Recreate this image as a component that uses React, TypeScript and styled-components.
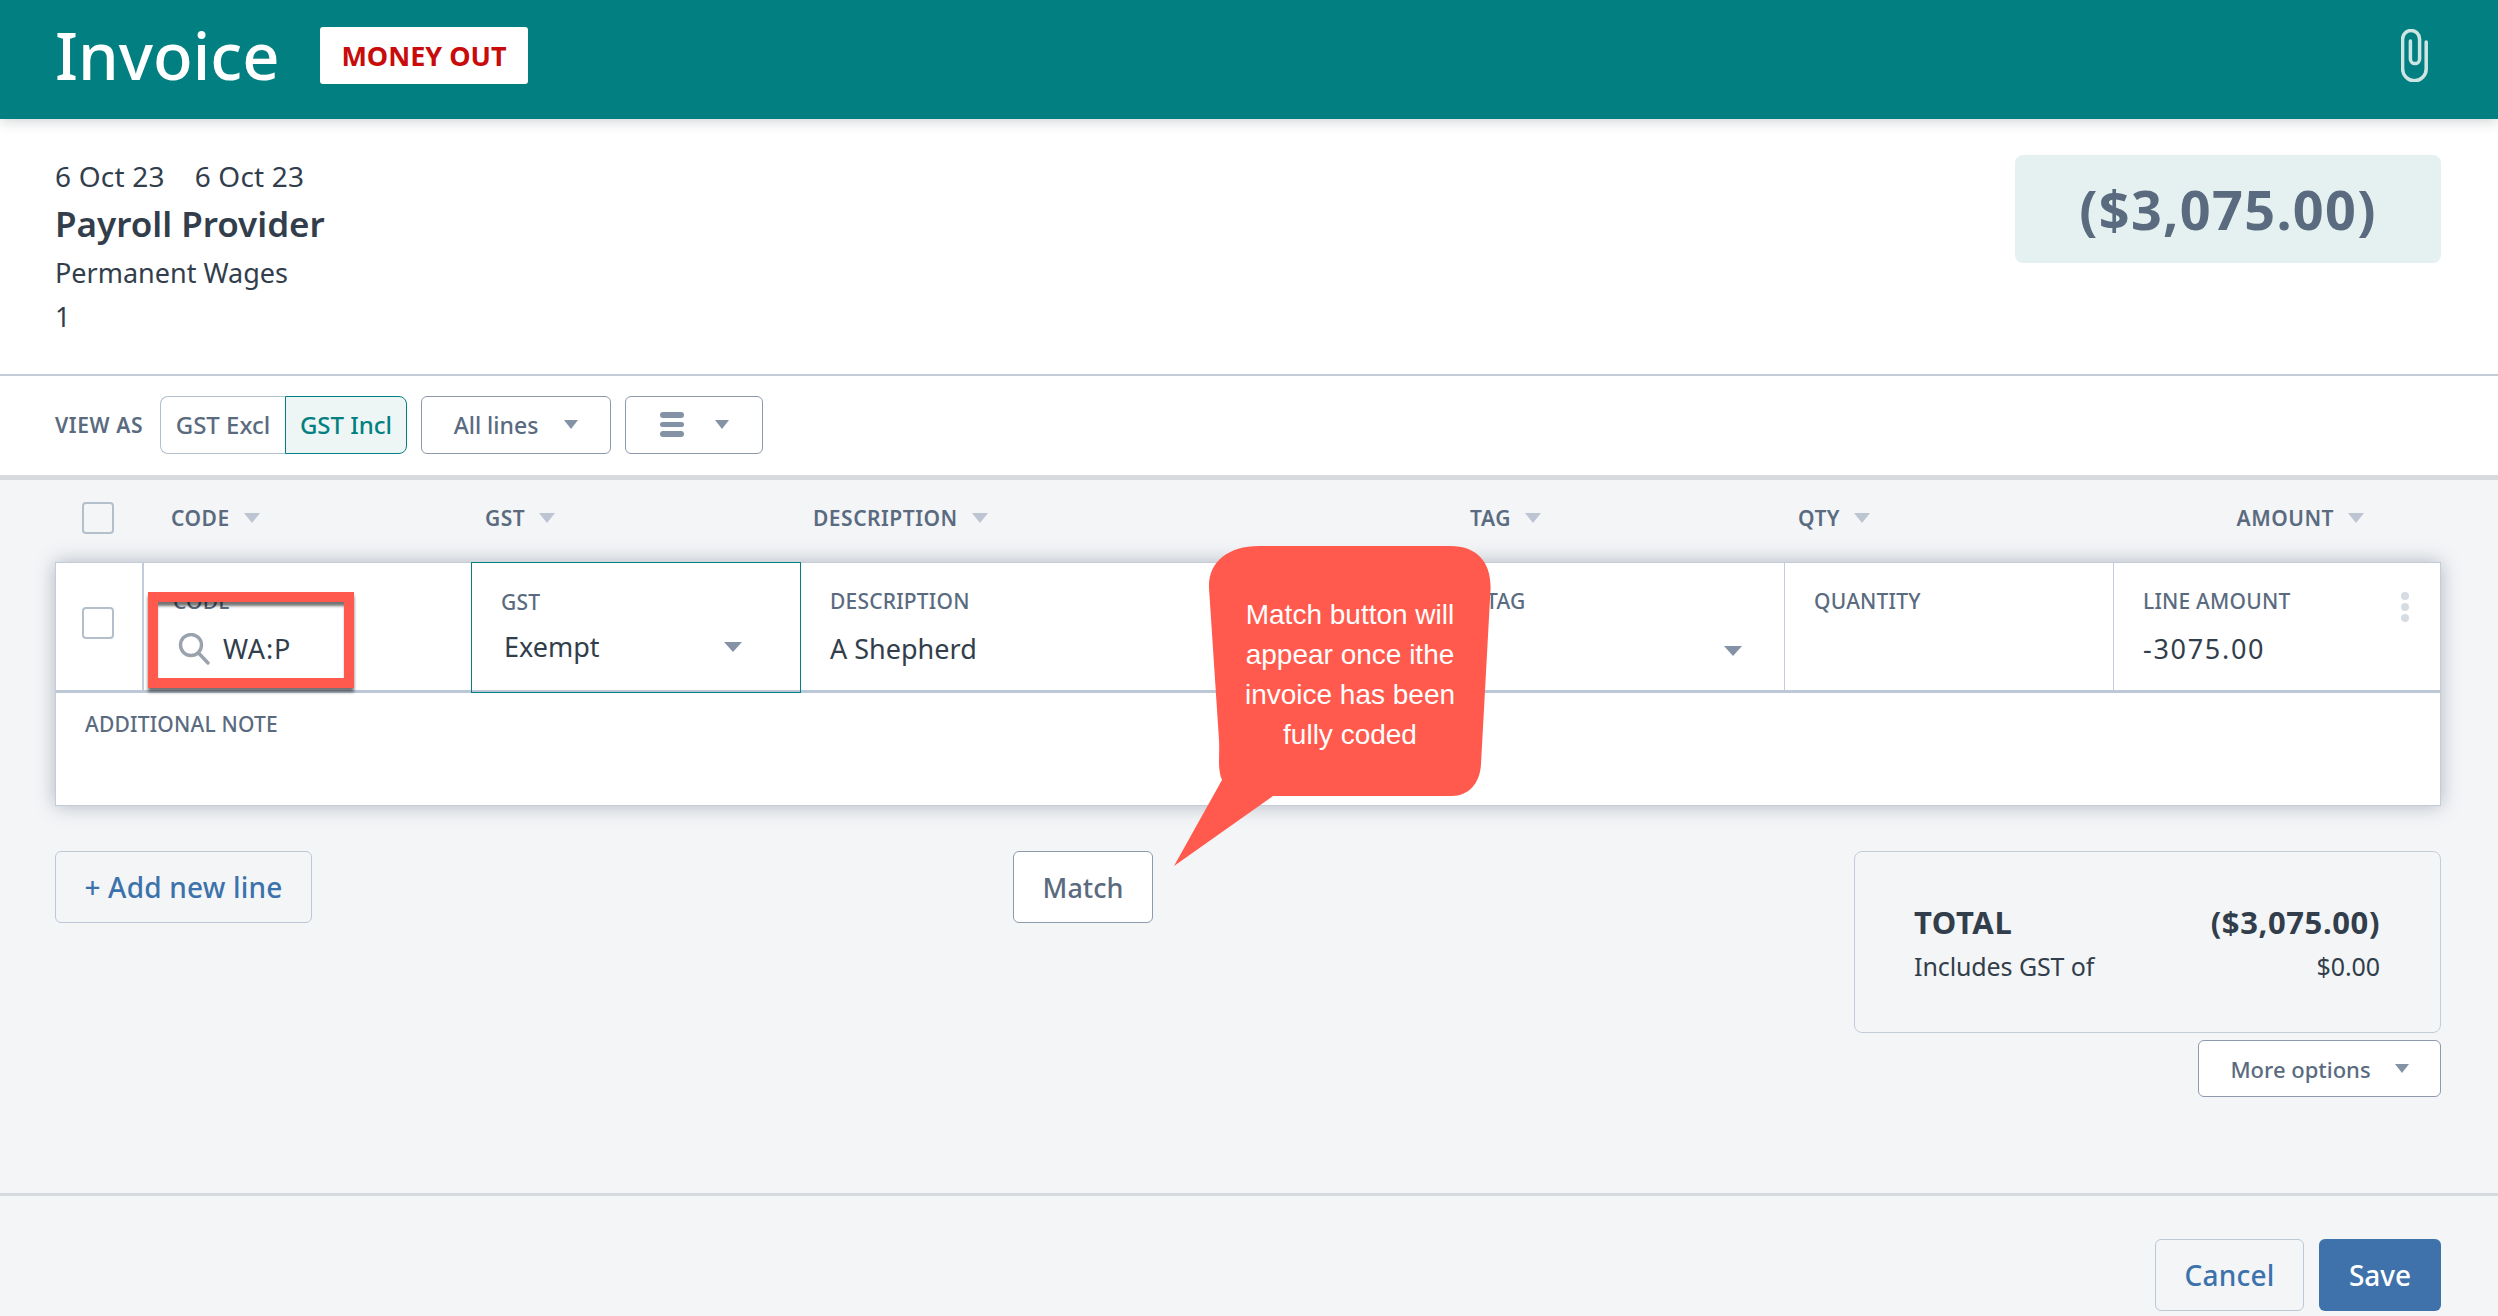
import React from "react";
import styled, { createGlobalStyle } from "styled-components";

const FONT = `"Noto Sans", Roboto, "Liberation Sans", sans-serif`;

const Global = createGlobalStyle`
  html, body { margin: 0; padding: 0; background: #f4f5f7; }
  * { box-sizing: border-box; }
  body { font-family: ${FONT}; color: #323e4b; }
`;

const Page = styled.div`
  position: relative;
  width: 2498px;
  height: 1316px;
  overflow: hidden;
  background: #f4f5f7;
`;

const Banner = styled.header`
  position: relative;
  z-index: 1;
  height: 119px;
  background: #028081;
  display: flex;
  align-items: center;
  padding: 0 70px 9px 55px;
  box-shadow: 0 3px 12px rgba(40, 50, 60, 0.2);
`;
const Title = styled.h1`
  margin: 0;
  width: 265px;
  font-size: 65px;
  font-weight: 500;
  color: #fff;
  line-height: 1;
`;
const Badge = styled.span`
  width: 208px;
  height: 57px;
  background: #fff;
  border-radius: 3px;
  color: #c80b0b;
  font-size: 27px;
  font-weight: 700;
  display: flex;
  align-items: center;
  justify-content: center;
`;
const Clip = styled.svg`
  margin-left: auto;
  width: 27px;
  height: 53px;
`;

const Summary = styled.section`
  height: 255px;
  background: #fff;
  padding: 36px 57px 0 55px;
  display: flex;
  justify-content: space-between;
  align-items: flex-start;
`;
const SummaryLines = styled.div`
  display: flex;
  flex-direction: column;
`;
const Dates = styled.div`
  display: flex;
  gap: 30px;
  font-size: 28px;
  letter-spacing: 0.2px;
  line-height: 42px;
`;
const Vendor = styled.div`
  font-size: 35px;
  font-weight: 600;
  line-height: 54px;
`;
const Meta = styled.div`
  font-size: 27px;
  line-height: 44px;
`;
const AmountBox = styled.div`
  width: 426px;
  height: 108px;
  background: #e4f1f0;
  border-radius: 8px;
  color: #5a6b80;
  font-size: 54px;
  letter-spacing: 1.3px;
  font-weight: 700;
  display: flex;
  align-items: center;
  justify-content: center;
`;

const Toolbar = styled.div`
  height: 106px;
  background: #fff;
  border-top: 2px solid #c3ccd8;
  border-bottom: 5px solid #d6dade;
  display: flex;
  align-items: center;
  padding: 0 0 2px 55px;
`;
const ViewAs = styled.span`
  font-size: 21px;
  letter-spacing: 0.6px;
  font-weight: 600;
  color: #5a6b80;
  width: 105px;
`;
const Toggle = styled.button<{ $active?: boolean; $first?: boolean }>`
  height: 58px;
  width: ${(p) => (p.$first ? "125px" : "122px")};
  font: 500 24px ${FONT};
  background: ${(p) => (p.$active ? "#eef6f5" : "#fff")};
  color: ${(p) => (p.$active ? "#028081" : "#5a6b80")};
  border: 1.5px solid ${(p) => (p.$active ? "#028081" : "#b4bfcc")};
  border-right-width: ${(p) => (p.$first ? 0 : "1.5px")};
  border-radius: ${(p) => (p.$first ? "8px 0 0 8px" : "0 8px 8px 0")};
  padding: 0;
`;
const DropButton = styled.button<{ $w: number; $h?: number; $gap?: number; $size?: number }>`
  height: ${(p) => p.$h ?? 58}px;
  width: ${(p) => p.$w}px;
  background: #fff;
  border: 1.5px solid #8d9aab;
  border-radius: 6px;
  color: #5a6b80;
  font: 500 ${(p) => p.$size ?? 23}px ${FONT};
  display: flex;
  align-items: center;
  justify-content: center;
  gap: ${(p) => p.$gap ?? 26}px;
  padding: 0;
`;
const ToolGroup = styled.div`
  display: flex;
  margin-right: 14px;
`;
const Caret = styled.i<{ $w?: number; $c?: string }>`
  display: block;
  flex: none;
  width: 0;
  height: 0;
  border-left: ${(p) => (p.$w ?? 16) / 2}px solid transparent;
  border-right: ${(p) => (p.$w ?? 16) / 2}px solid transparent;
  border-top: ${(p) => Math.round((p.$w ?? 16) * 0.58)}px solid ${(p) => p.$c ?? "#8492a6"};
`;
const StackIcon = styled.span`
  display: flex;
  flex-direction: column;
  gap: 4px;
  width: 24px;
`;
const StackBar = styled.i`
  display: block;
  height: 5.5px;
  border-radius: 3px;
  background: #8492a6;
`;

const ColumnHead = styled.div`
  height: 82px;
  padding: 0 134px 6px 82px;
  display: grid;
  grid-template-columns: 89px 314px 328px 657px 328px 200px 1fr;
  align-items: center;
`;
const Check = styled.span`
  display: block;
  width: 32px;
  height: 32px;
  background: transparent;
  border: 2px solid #b4bfcc;
  border-radius: 4px;
`;
const ColTitle = styled.span<{ $right?: boolean }>`
  display: flex;
  align-items: center;
  gap: 14px;
  font-size: 21px;
  letter-spacing: 0.5px;
  font-weight: 600;
  color: #5a6b80;
  justify-content: ${(p) => (p.$right ? "flex-end" : "flex-start")};
`;

const Card = styled.div`
  margin: 0 57px 0 55px;
  height: 244px;
  background: #fff;
  border: 1px solid #c3ccd8;
  box-shadow: 0 0 18px rgba(90, 107, 128, 0.45);
`;
const RowGrid = styled.div`
  height: 130px;
  display: grid;
  grid-template-columns: 88px 328px 329px 656px 328px 329px 1fr;
  border-bottom: 3px solid #bcc8d6;
`;
const CheckCell = styled.div`
  display: flex;
  align-items: center;
  padding: 0 0 8px 26px;
  border-right: 2px solid #c3ccd8;
`;
const Cell = styled.div<{ $focus?: boolean; $last?: boolean }>`
  position: relative;
  padding: 26px 28px 0 29px;
  border-right: ${(p) => (p.$last ? "none" : "1px solid #c3ccd8")};
  ${(p) =>
    p.$focus
      ? "border: 1.5px solid #028081; margin: -1px 0 -3px -1px; padding-top: 27px;"
      : ""}
`;
const Label = styled.div`
  font-size: 21px;
  letter-spacing: 0.2px;
  font-weight: 500;
  line-height: 24px;
  color: #5a6b80;
`;
const Value = styled.div<{ $numeric?: boolean }>`
  margin-top: 16px;
  font-size: 27px;
  letter-spacing: ${(p) => (p.$numeric ? "1.7px" : "0")};
  line-height: 40px;
  color: #323e4b;
  display: flex;
  align-items: center;
  justify-content: space-between;
`;
const ExemptValue = styled(Value)`
  margin: 13px 30px 0 3px;
`;
const TagCaret = styled.span`
  position: absolute;
  right: 42px;
  top: 83px;
`;
const CodeValue = styled.div`
  margin-top: 16px;
  display: flex;
  align-items: center;
  gap: 13px;
  font-size: 27px;
  letter-spacing: 0.8px;
  line-height: 40px;
`;
const SearchSvg = styled.svg`
  width: 32px;
  height: 32px;
  flex: none;
  margin-left: 5px;
`;
const Dots = styled.span`
  position: absolute;
  right: 31px;
  top: 29px;
  display: flex;
  flex-direction: column;
  gap: 3px;
`;
const Dot = styled.i`
  display: block;
  width: 8px;
  height: 8px;
  border-radius: 50%;
  background: #d6dce3;
`;
const NoteArea = styled.div`
  padding: 19px 29px;
`;

const RedFrame = styled.div`
  position: absolute;
  left: 148px;
  top: 592px;
  width: 206px;
  height: 96px;
  border: 10px solid #ff5a4d;
  box-shadow: 0 4px 3px rgba(0, 0, 0, 0.55), inset 0 5px 3px -1px rgba(0, 0, 0, 0.55);
  z-index: 3;
`;

const Actions = styled.div`
  margin: 45px 57px 0 55px;
  display: grid;
  grid-template-columns: 958px 1fr 587px;
  align-items: start;
`;
const GhostButton = styled.button<{ $w: number }>`
  width: ${(p) => p.$w}px;
  height: 72px;
  background: transparent;
  border: 1.5px solid #bcc8d6;
  border-radius: 6px;
  color: #3c72ab;
  font: 500 28px ${FONT};
  letter-spacing: 0.2px;
  padding: 0;
`;
const MatchButton = styled.button`
  width: 140px;
  height: 72px;
  background: #fff;
  border: 1.5px solid #8d9aab;
  border-radius: 6px;
  color: #5a6b80;
  font: 500 27px ${FONT};
  padding: 0;
`;
const TotalColumn = styled.div`
  display: flex;
  flex-direction: column;
  align-items: flex-end;
  gap: 7px;
`;
const TotalCard = styled.div`
  width: 587px;
  height: 182px;
  border: 1.5px solid #c3cdda;
  border-radius: 8px;
  padding: 48px 60px 0 59px;
`;
const TotalRow = styled.div`
  display: flex;
  justify-content: space-between;
  font-size: 31px;
  letter-spacing: 0.6px;
  font-weight: 700;
  line-height: 44px;
`;
const GstRow = styled.div`
  display: flex;
  justify-content: space-between;
  font-size: 25px;
  letter-spacing: -0.1px;
  line-height: 44px;
`;

const FooterRule = styled.div`
  margin-top: 96px;
  height: 3px;
  background: #d6dade;
`;
const Footer = styled.footer`
  margin: 43px 57px 0 0;
  display: flex;
  justify-content: flex-end;
  gap: 15px;
`;
const SaveButton = styled.button`
  width: 122px;
  height: 72px;
  background: #3f72ab;
  border: none;
  border-radius: 6px;
  color: #fff;
  font: 500 28px ${FONT};
  padding: 0;
`;

const Callout = styled.div`
  position: absolute;
  left: 1170px;
  top: 540px;
  width: 330px;
  height: 330px;
  z-index: 4;
`;
const CalloutShape = styled.svg`
  display: block;
  width: 330px;
  height: 330px;
`;
const CalloutText = styled.div`
  position: absolute;
  left: 29px;
  top: 55px;
  width: 302px;
  text-align: center;
  color: #fff;
  font-family: "Liberation Sans", Arial, sans-serif;
  font-size: 28px;
  line-height: 40px;
`;

export default function App() {
  return (
    <Page>
      <Global />
      <Banner>
        <Title>Invoice</Title>
        <Badge>MONEY OUT</Badge>
        <Clip viewBox="0 0 27 53" fill="none" stroke="#cfe5e4" strokeWidth="3.5" strokeLinecap="round">
          <path d="M25.2 13V40a11.8 11.8 0 0 1-23.6 0V10a8.5 8.5 0 0 1 17 0V30a4.6 4.6 0 0 1-9.2 0V12" />
        </Clip>
      </Banner>

      <Summary>
        <SummaryLines>
          <Dates>
            <span>6 Oct 23</span>
            <span>6 Oct 23</span>
          </Dates>
          <Vendor>Payroll Provider</Vendor>
          <Meta>Permanent Wages</Meta>
          <Meta>1</Meta>
        </SummaryLines>
        <AmountBox>($3,075.00)</AmountBox>
      </Summary>

      <Toolbar>
        <ViewAs>VIEW AS</ViewAs>
        <ToolGroup>
          <Toggle $first>GST Excl</Toggle>
          <Toggle $active>GST Incl</Toggle>
        </ToolGroup>
        <ToolGroup>
          <DropButton $w={190}>
            All lines
            <Caret $w={15} />
          </DropButton>
        </ToolGroup>
        <DropButton $w={138} $gap={31}>
          <StackIcon>
            <StackBar />
            <StackBar />
            <StackBar />
          </StackIcon>
          <Caret $w={15} />
        </DropButton>
      </Toolbar>

      <ColumnHead>
        <Check />
        <ColTitle>CODE <Caret $w={17} $c="#bcc5d1" /></ColTitle>
        <ColTitle>GST <Caret $w={17} $c="#bcc5d1" /></ColTitle>
        <ColTitle>DESCRIPTION <Caret $w={17} $c="#bcc5d1" /></ColTitle>
        <ColTitle>TAG <Caret $w={17} $c="#bcc5d1" /></ColTitle>
        <ColTitle>QTY <Caret $w={17} $c="#bcc5d1" /></ColTitle>
        <ColTitle $right>AMOUNT <Caret $w={17} $c="#bcc5d1" /></ColTitle>
      </ColumnHead>

      <Card>
        <RowGrid>
          <CheckCell>
            <Check />
          </CheckCell>
          <Cell>
            <Label>CODE</Label>
            <CodeValue>
              <SearchSvg viewBox="0 0 32 32" fill="none" stroke="#9aa3ad" strokeWidth="3.4" strokeLinecap="round">
                <circle cx="13" cy="12" r="10.5" />
                <path d="M20.5 20 30 30" />
              </SearchSvg>
              WA:P
            </CodeValue>
          </Cell>
          <Cell $focus>
            <Label>GST</Label>
            <ExemptValue>
              Exempt
              <Caret $w={18} $c="#8492a6" />
            </ExemptValue>
          </Cell>
          <Cell>
            <Label>DESCRIPTION</Label>
            <Value>A Shepherd</Value>
          </Cell>
          <Cell>
            <Label>TAG</Label>
            <TagCaret>
              <Caret $w={18} $c="#8492a6" />
            </TagCaret>
          </Cell>
          <Cell>
            <Label>QUANTITY</Label>
          </Cell>
          <Cell $last>
            <Label>LINE AMOUNT</Label>
            <Value $numeric>-3075.00</Value>
            <Dots>
              <Dot />
              <Dot />
              <Dot />
            </Dots>
          </Cell>
        </RowGrid>
        <NoteArea>
          <Label>ADDITIONAL NOTE</Label>
        </NoteArea>
      </Card>

      <RedFrame />

      <Actions>
        <GhostButton $w={257}>+ Add new line</GhostButton>
        <MatchButton>Match</MatchButton>
        <TotalColumn>
          <TotalCard>
            <TotalRow>
              <span>TOTAL</span>
              <span>($3,075.00)</span>
            </TotalRow>
            <GstRow>
              <span>Includes GST of</span>
              <span>$0.00</span>
            </GstRow>
          </TotalCard>
          <DropButton $w={243} $h={57} $gap={24} $size={22}>
            More options
            <Caret $w={15} />
          </DropButton>
        </TotalColumn>
      </Actions>

      <FooterRule />
      <Footer>
        <GhostButton $w={149}>Cancel</GhostButton>
        <SaveButton>Save</SaveButton>
      </Footer>

      <Callout>
        <CalloutShape viewBox="0 0 330 330">
          <path
            fill="#ff5a4d"
            d="M89 6H280C307 6 321 22 320.6 48L311 224C310 244 298 256 282 256H103L4 326 52 240C47 228 50 215 49 200L39 48C38 22 58 6 89 6Z"
          />
        </CalloutShape>
        <CalloutText>
          Match button will
          <br />
          appear once ithe
          <br />
          invoice has been
          <br />
          fully coded
        </CalloutText>
      </Callout>
    </Page>
  );
}
